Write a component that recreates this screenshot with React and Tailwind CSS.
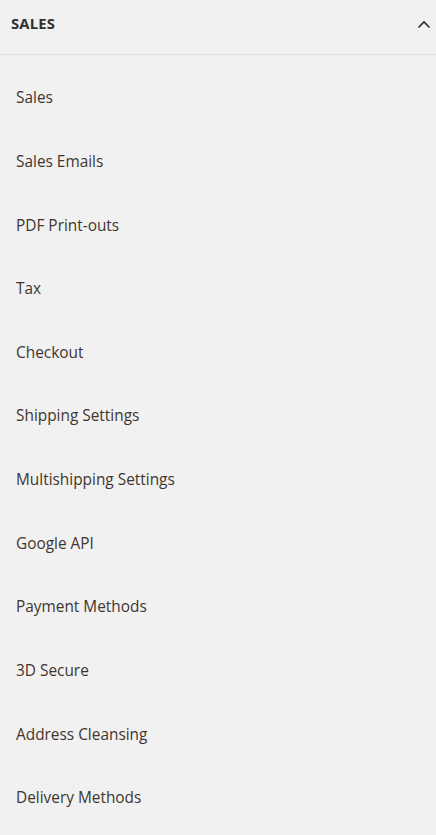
import React from 'react';

const items = [
  'Sales',
  'Sales Emails',
  'PDF Print-outs',
  'Tax',
  'Checkout',
  'Shipping Settings',
  'Multishipping Settings',
  'Google API',
  'Payment Methods',
  '3D Secure',
  'Address Cleansing',
  'Delivery Methods',
];

export default function App() {
  return (
    <div
      className="w-[436px] h-[835px] bg-[#f1f1f1] overflow-hidden"
      style={{ fontFamily: '"Open Sans", sans-serif' }}
    >
      <div className="h-[55px] flex items-center justify-between pl-[11px] pr-[5px] pb-[7px] border-b border-[#e0e0e0]">
        <span className="text-[14.8px] font-bold text-[#303030] tracking-[0.2px]">SALES</span>
        <svg width="14" height="9" viewBox="0 0 14 9" fill="none" className="mt-[2px]">
          <path d="M1.5 7.5L7 2L12.5 7.5" stroke="#303030" strokeWidth="1.6" />
        </svg>
      </div>
      <ul className="pt-[11px]">
        {items.map((item) => (
          <li key={item} className="h-[63.64px] flex items-center pl-[16px] text-[15.4px] text-[#41362f]">
            {item}
          </li>
        ))}
      </ul>
    </div>
  );
}
